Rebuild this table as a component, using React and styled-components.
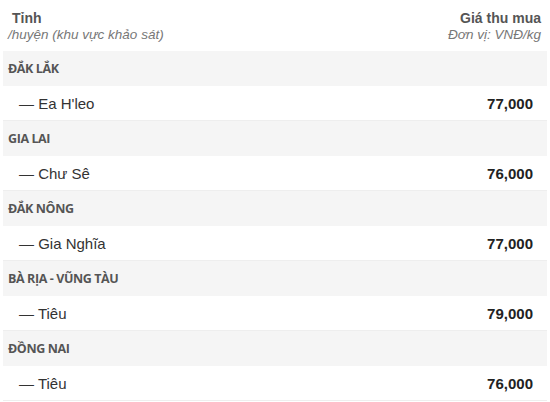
import styled, { createGlobalStyle } from 'styled-components'

const GlobalStyle = createGlobalStyle`
    body {
        margin: 0;
        background: #fff;
        font-family: "Liberation Sans", Arial, sans-serif;
    }
`

const data = [
    { province: 'ĐẮK LẮK', district: 'Ea H\'leo', price: '77,000' },
    { province: 'GIA LAI', district: 'Chư Sê', price: '76,000' },
    { province: 'ĐẮK NÔNG', district: 'Gia Nghĩa', price: '77,000' },
    { province: 'BÀ RỊA - VŨNG TÀU', district: 'Tiêu', price: '79,000' },
    { province: 'ĐỒNG NAI', district: 'Tiêu', price: '76,000' },
]

const App = () => {
    return (
        <Table>
            <GlobalStyle />
            <Head>
                <div>
                    <Title>Tỉnh</Title>
                    <Sub>/huyện (khu vực khảo sát)</Sub>
                </div>
                <HeadRight>
                    <Title>Giá thu mua</Title>
                    <Sub>Đơn vị: VNĐ/kg</Sub>
                </HeadRight>
            </Head>
            {data.map((row) => (
                <div key={row.province}>
                    <Province>{row.province}</Province>
                    <Item>
                        <span>— {row.district}</span>
                        <Price>{row.price}</Price>
                    </Item>
                </div>
            ))}
        </Table>
    )
}

const Table = styled.div`
    width: 544px;
    margin-left: 3px;
`
const Head = styled.div`
    height: 51px;
    box-sizing: border-box;
    padding: 10px 6px 0 5px;
    display: flex;
    justify-content: space-between;
`
const HeadRight = styled.div`
    text-align: right;
`
const Title = styled.div`
    font-size: 14px;
    font-weight: 700;
    color: #555;
    line-height: 17px;
    padding-left: 4px;
`
const Sub = styled.div`
    font-size: 13.5px;
    font-style: italic;
    color: #777;
    line-height: 16px;
`
const Province = styled.div`
    height: 35px;
    background: #f5f5f5;
    display: flex;
    align-items: center;
    padding-left: 5px;
    font-family: "Open Sans", sans-serif;
    font-size: 12.5px;
    font-weight: 700;
    letter-spacing: -0.4px;
    color: #555;
`
const Item = styled.div`
    height: 34px;
    border-bottom: 1px solid #eee;
    display: flex;
    align-items: center;
    justify-content: space-between;
    padding: 0 14px 0 16px;
    font-size: 15px;
    color: #333;
`
const Price = styled.span`
    font-weight: 700;
    color: #222;
`

export default App
